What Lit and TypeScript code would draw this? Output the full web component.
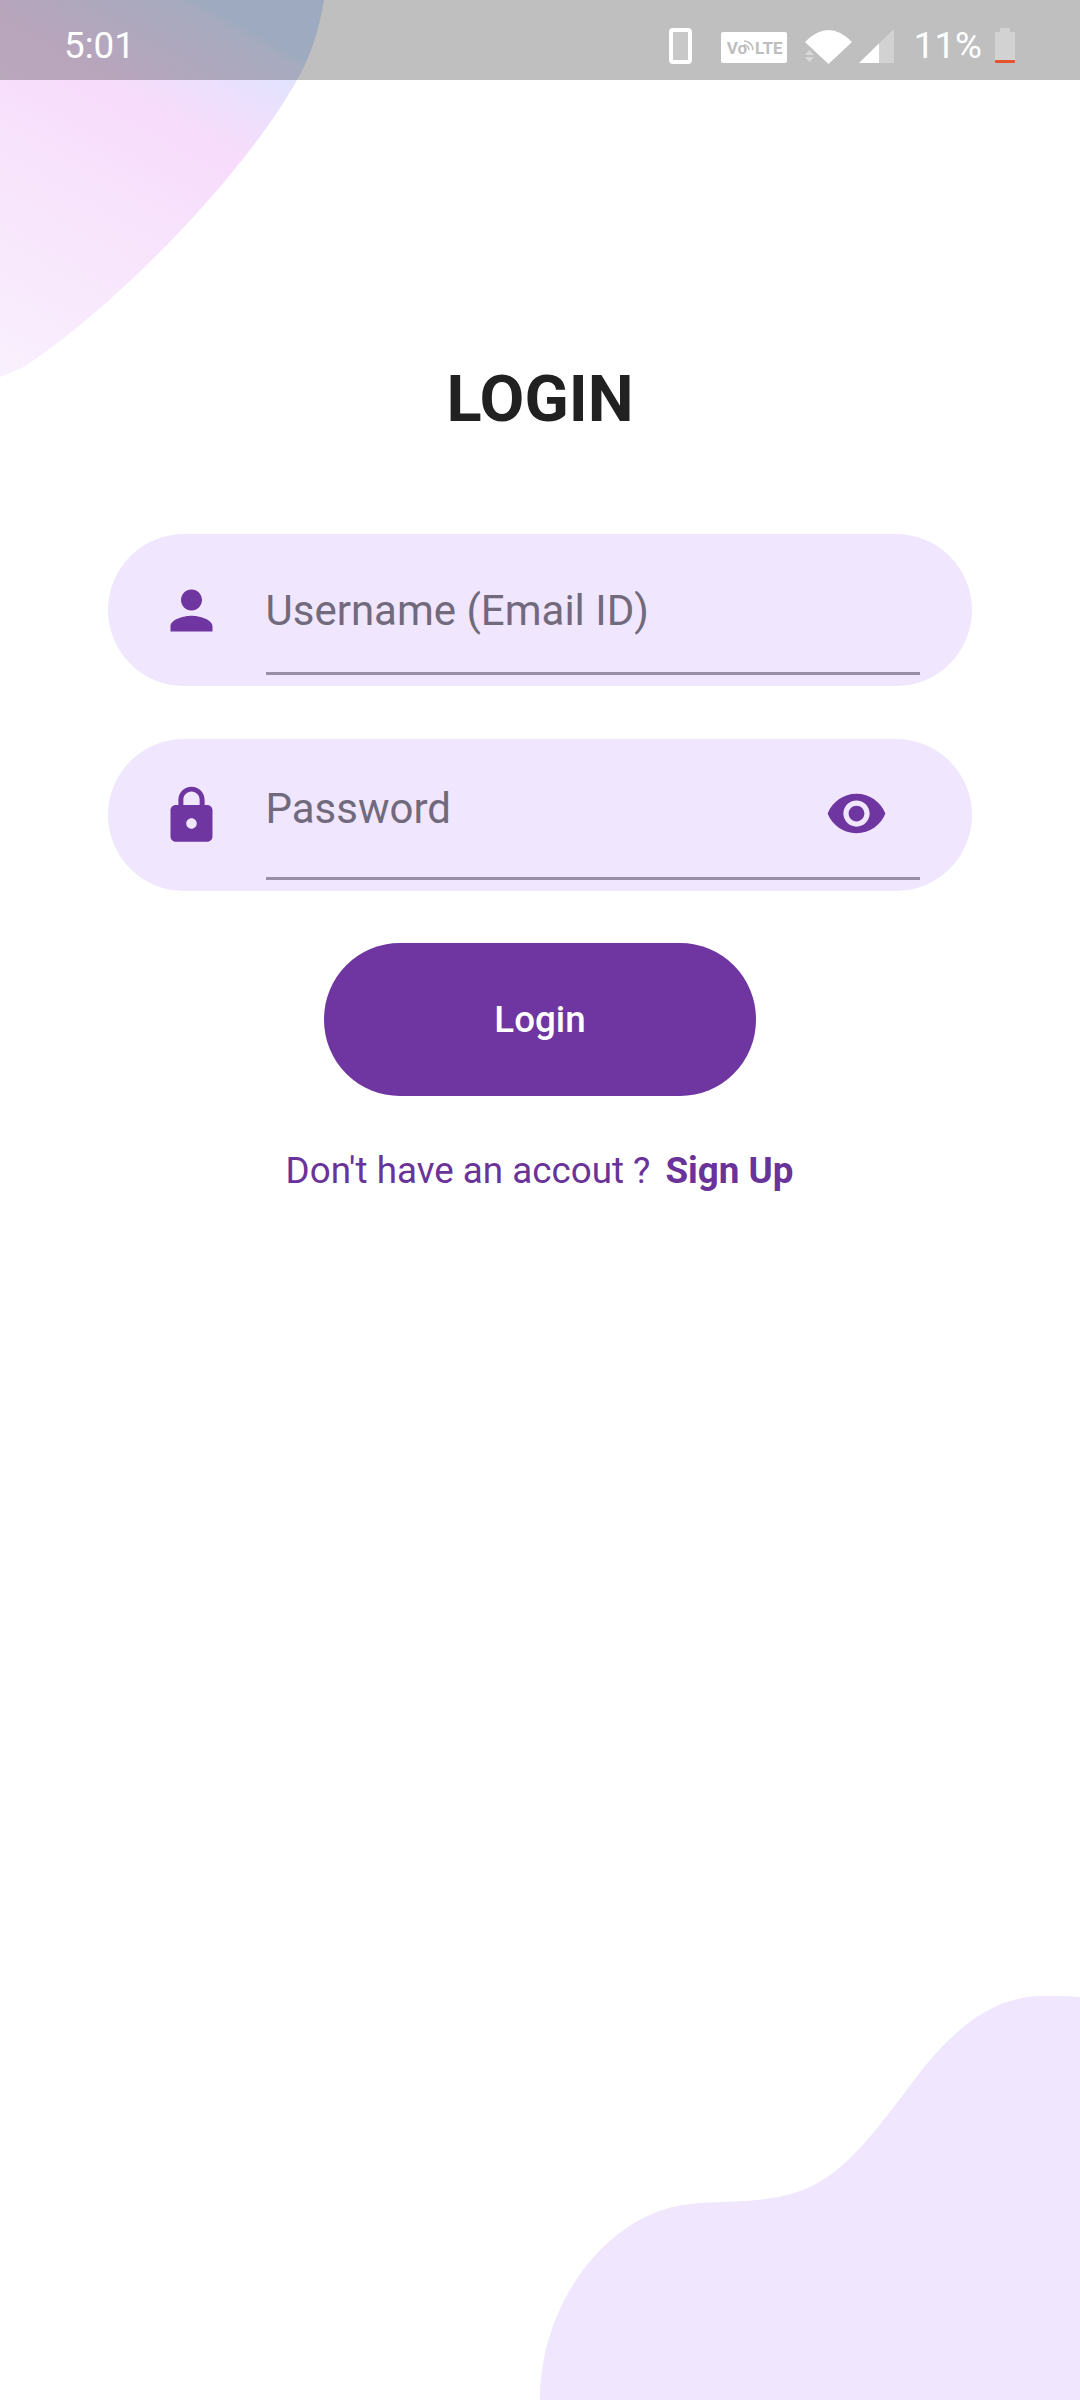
import { LitElement, html, css } from "lit";
import { customElement } from "lit/decorators.js";

@customElement("app-root")
export class AppRoot extends LitElement {
  static styles = css`
    :host {
      display: block;
      position: relative;
      width: 1080px;
      height: 2400px;
      overflow: hidden;
      background: #fff;
      font-family: Roboto, "Liberation Sans", sans-serif;
    }
    .blob {
      position: absolute;
      left: 0;
      top: 0;
      width: 1080px;
      height: 2400px;
    }
    .status {
      position: relative;
      height: 80px;
      display: flex;
      align-items: center;
      justify-content: space-between;
      padding: 0 65px 0 64px;
      background: rgba(0, 0, 0, 0.25);
      color: #fff;
      font-size: 36.75px;
    }
    .time { margin-top: 10px; }
    .status-icons {
      display: flex;
      align-items: center;
    }
    .status-icons svg {
      display: block;
    }
    .phone { margin: 12px 28.5px 0 0; }
    .volte {
      position: relative;
      box-sizing: border-box;
      width: 66px;
      height: 31px;
      margin: 15px 18px 0 0;
      padding: 1px 0 0 6px;
      display: flex;
      align-items: center;
      gap: 8px;
      background: #fff;
      border-radius: 2px;
      color: #bebebe;
      font-size: 17px;
      font-weight: 700;
    }
    .volte .arcs {
      position: absolute;
      left: 23px;
      top: 8px;
    }
    .wifi { margin: 13px 7px 0 0; }
    .signal { margin: 12px 20px 0 0; }
    .pct { margin: 10px 13px 0 0; }
    .batt { margin-top: 11px; }
    main {
      position: relative;
      display: flex;
      flex-direction: column;
      align-items: center;
    }
    h1 {
      margin: 282px 0 98px;
      font-size: 65px;
      line-height: 74px;
      font-weight: 700;
      color: #212121;
    }
    .field {
      box-sizing: border-box;
      width: 864px;
      height: 152px;
      margin-bottom: 53px;
      padding: 0 52.5px 0 51.5px;
      display: flex;
      gap: 43px;
      align-items: center;
      border-radius: 76px;
      background: #f0e6fe;
    }
    .field.last { margin-bottom: 52px; }
    .field svg {
      flex: none;
      width: 63px;
      height: 63px;
      fill: #6f35a0;
    }
    .input {
      box-sizing: border-box;
      flex: 1;
      align-self: stretch;
      height: 141px;
      margin-bottom: 11px;
      border-bottom: 3px solid #9b8fa6;
      display: flex;
      align-items: center;
      justify-content: space-between;
      color: #716a7c;
      font-size: 42px;
    }
    .hint { margin-top: 14px; }
    .hint.up { margin-top: 0; }
    .eye {
      margin: 11px 32px 0 0;
    }
    .btn {
      width: 432px;
      height: 153px;
      padding: 0;
      border: 0;
      border-radius: 76px;
      background: #6f35a0;
      color: #fff;
      font: 500 36.75px Roboto, "Liberation Sans", sans-serif;
    }
    .signup {
      margin: 51px 1px 0 0;
      display: flex;
      gap: 15px;
      font-size: 36.75px;
      line-height: 48px;
      color: #6a3399;
    }
    .signup b { font-weight: 700; }
  `;

  render() {
    return html`
      <svg class="blob" viewBox="0 0 1080 2400">
        <defs>
          <linearGradient id="g" gradientUnits="userSpaceOnUse" x1="0" y1="370" x2="207" y2="3">
            <stop offset="0" stop-color="#f9f0fd" />
            <stop offset="0.72" stop-color="#f7dcfb" />
            <stop offset="0.97" stop-color="#dfe4ff" />
            <stop offset="1" stop-color="#d2e3ff" />
          </linearGradient>
        </defs>
        <path fill="url(#g)" d="M0 0H324C317 40 308 60 297 80C250 165 130 295 27 365C18 370 8 374 0 377Z" />
        <path fill="#f0e6fe" d="M1080 2400H540C540 2300 610 2212 690 2204C730 2200 770 2205 810 2187C850 2168 880 2125 918 2075C960 2020 1000 1997 1040 1996C1055 1996 1070 1996 1080 1997Z" />
      </svg>

      <div class="status">
        <span class="time">5:01</span>
        <div class="status-icons">
          <svg class="phone" width="23" height="36" viewBox="0 0 23 36">
            <rect x="2" y="2" width="19" height="32" rx="2" fill="rgba(255,255,255,.15)" stroke="#fff" stroke-width="4" />
          </svg>
          <div class="volte">
            <span>Vo</span><span>LTE</span>
            <svg class="arcs" width="10" height="11" viewBox="0 0 10 11" fill="none" stroke="#bebebe" stroke-width="1.5">
              <path d="M0 1A9 9 0 0 1 9 10" />
              <path d="M0 5A5 5 0 0 1 5 10" />
            </svg>
          </div>
          <svg class="wifi" width="47" height="34" viewBox="0 0 47 34">
            <path fill="#fff" d="M23.5 34L0 12Q23.5 -12 47 12Z" />
            <path fill="rgba(255,255,255,.4)" d="M4.5 20L9 25H0ZM0 27H9L4.5 32Z" />
          </svg>
          <svg class="signal" width="35" height="34" viewBox="0 0 35 34">
            <path fill="rgba(255,255,255,.3)" d="M35 0V34H20V14.5Z" />
            <path fill="#fff" d="M0 34L20 14.5V34Z" />
          </svg>
          <span class="pct">11%</span>
          <svg class="batt" width="20" height="35" viewBox="0 0 20 35">
            <path fill="rgba(255,255,255,.3)" d="M5 0H15V4H20V32H0V4H5Z" />
            <rect y="32" width="20" height="3" rx="1" fill="#e8532f" />
          </svg>
        </div>
      </div>

      <main>
        <h1>LOGIN</h1>
        <div class="field">
          <svg viewBox="0 0 24 24"><path d="M12 12c2.21 0 4-1.79 4-4s-1.79-4-4-4-4 1.79-4 4 1.79 4 4 4zm0 2c-2.67 0-8 1.34-8 4v2h16v-2c0-2.66-5.33-4-8-4z" /></svg>
          <div class="input"><span class="hint">Username (Email ID)</span></div>
        </div>
        <div class="field last">
          <svg viewBox="0 0 24 24"><path d="M18 8h-1V6c0-2.76-2.24-5-5-5S7 3.24 7 6v2H6c-1.1 0-2 .9-2 2v10c0 1.1.9 2 2 2h12c1.1 0 2-.9 2-2V10c0-1.1-.9-2-2-2zm-6 9c-1.1 0-2-.9-2-2s.9-2 2-2 2 .9 2 2-.9 2-2 2zm3.1-9H8.9V6c0-1.71 1.39-3.1 3.1-3.1 1.71 0 3.1 1.39 3.1 3.1v2z" /></svg>
          <div class="input">
            <span class="hint up">Password</span>
            <svg class="eye" viewBox="0 0 24 24"><path d="M12 4.5C7 4.5 2.73 7.61 1 12c1.73 4.39 6 7.5 11 7.5s9.27-3.11 11-7.5c-1.73-4.39-6-7.5-11-7.5zM12 17c-2.76 0-5-2.24-5-5s2.24-5 5-5 5 2.24 5 5-2.24 5-5 5zm0-8c-1.66 0-3 1.34-3 3s1.34 3 3 3 3-1.34 3-3-1.34-3-3-3z" /></svg>
          </div>
        </div>
        <button class="btn">Login</button>
        <div class="signup"><span>Don't have an accout ?</span><b>Sign Up</b></div>
      </main>
    `;
  }
}
